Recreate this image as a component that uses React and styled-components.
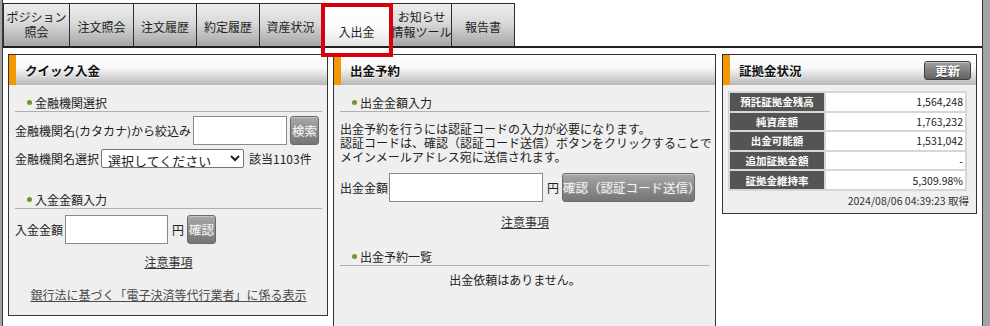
import React from 'react';
import styled, { createGlobalStyle } from 'styled-components';

const Global = createGlobalStyle`
  html, body { margin: 0; padding: 0; background: #fff; }
  body { font-family: "Noto Sans CJK JP", "Noto Sans", sans-serif; color: #222; }
  * { box-sizing: border-box; }
`;

const Frame = styled.div`
  width: 990px;
  height: 326px;
  overflow: hidden;
  background: #a3a3a3;
  padding-left: 2px;
  padding-right: 7px;
`;

const Page = styled.div`
  height: 326px;
  background: #fff;
  border-left: 1px solid #3a3a3a;
  border-right: 1px solid #3a3a3a;
`;

const TabStrip = styled.div`
  display: flex;
  align-items: flex-start;
  height: 48px;
  padding-top: 3px;
  border-bottom: 2px solid #222;
`;

const Tab = styled.div`
  position: relative;
  flex: none;
  width: ${p => p.$w}px;
  height: ${p => (p.$active ? 41 : 43)}px;
  margin-top: ${p => (p.$active ? 2 : 0)}px;
  border: 1px solid #2e2e2e;
  border-left: ${p => (p.$first ? '1px solid #2e2e2e' : 'none')};
  border-bottom: none;
  border-top: ${p => (p.$active ? '2px solid #f39800' : '1px solid #2e2e2e')};
  background: ${p =>
    p.$active
      ? 'linear-gradient(to bottom, #ffffff 0%, #fbfbfb 55%, #e3e3e3 100%)'
      : 'linear-gradient(to bottom, #ededed 0%, #d9d9d9 45%, #b4b4b4 85%, #a6a6a6 100%)'};
  display: flex;
  align-items: center;
  justify-content: center;
  text-align: center;
  white-space: nowrap;
  font-size: 12px;
  line-height: 15px;
  color: #1e1e1e;
  padding-top: ${p => (p.$active ? 9 : p.$multi ? 0 : 3)}px;
  padding-bottom: ${p => (p.$multi ? 3 : 0)}px;
`;

const TabLine = styled.span`
  display: block;
  height: 15px;
`;

const RedBox = styled.div`
  position: absolute;
  left: -1px;
  top: -4px;
  width: 72px;
  height: 54px;
  border: 4px solid #d7000f;
  pointer-events: none;
  z-index: 2;
`;

const PanelsRow = styled.div`
  display: flex;
  align-items: flex-start;
  padding: 6px 0 0 5px;
`;

const Panel = styled.section`
  flex: none;
  width: ${p => p.$w}px;
  height: ${p => p.$h}px;
  margin-left: ${p => p.$ml || 0}px;
  background: #efefef;
  border: 1px solid #333;
  display: flex;
  flex-direction: column;
`;

const PanelHeader = styled.header`
  height: 30px;
  flex: none;
  display: flex;
  align-items: center;
  justify-content: space-between;
  border-left: 7px solid #f39800;
  padding: 0 5px 0 9px;
  background: linear-gradient(to bottom, #ffffff 0%, #f8f8f8 42%, #dcdcdc 68%, #b8b8b8 100%);
`;

const PanelTitle = styled.h2`
  margin: 0;
  font-size: 12.5px;
  font-weight: bold;
  color: #111;
  text-shadow: 0 1px 0 #fff;
`;

const PanelBody = styled.div`
  padding: 0 5px 0 6px;
  display: flex;
  flex-direction: column;
`;

const SectionTitle = styled.div`
  margin-top: ${p => p.$mt}px;
  height: 19px;
  line-height: 19px;
  border-bottom: 1px solid #b0b0b0;
  padding-left: 12px;
  display: flex;
  align-items: center;
  font-size: 12px;
  color: #222;
`;

const Dot = styled.span`
  width: 5px;
  height: 5px;
  border-radius: 50%;
  background: #6a9a2b;
  margin-right: 3px;
  margin-top: 1px;
`;

const Row = styled.div`
  display: flex;
  align-items: center;
  margin-top: ${p => p.$mt}px;
  font-size: 12px;
  color: #222;
  white-space: nowrap;
`;

const TextInput = styled.input`
  width: ${p => p.$w}px;
  height: 29px;
  margin-left: ${p => p.$ml}px;
  border: 1px solid #8a8a8a;
  background: #fff;
  border-radius: 0;
  padding: 0 3px;
  font: inherit;
`;

const Yen = styled.span`
  margin-left: 4px;
`;

const GrayButton = styled.button`
  width: ${p => p.$w}px;
  height: 29px;
  margin-left: ${p => p.$ml}px;
  padding: 0;
  border: 1px solid #6a6a6a;
  border-radius: 3px;
  background: linear-gradient(to bottom, #a9a9a9 0%, #8c8c8c 50%, #757575 100%);
  color: #f2f2f2;
  font-family: inherit;
  font-size: 12.5px;
  white-space: nowrap;
  text-shadow: 0 0 2px rgba(255, 255, 255, 0.35);
  box-shadow: inset 0 1px 0 rgba(255, 255, 255, 0.35);
`;

const Select = styled.select`
  width: 143px;
  height: 19px;
  margin-left: 2px;
  font-family: inherit;
  font-size: 13px;
  color: #222;
  background: #fff;
  border: 1px solid #767676;
  border-radius: 2px;
  padding: 0 0 0 2px;
`;

const Count = styled.span`
  margin-left: 5px;
`;

const LinkLine = styled.div`
  margin-top: ${p => p.$mt}px;
  text-align: center;
  font-size: 12px;
  line-height: 16px;
  white-space: nowrap;
`;

const Link = styled.a`
  color: ${p => (p.$muted ? '#4a4a4a' : '#333')};
  text-decoration: underline;
  cursor: pointer;
`;

const Paragraph = styled.p`
  margin: 10px 0 0;
  font-size: 12px;
  line-height: 14px;
  color: #222;
  white-space: nowrap;
`;

const Notice = styled.div`
  margin-top: 6px;
  text-align: center;
  font-size: 12px;
  line-height: 16px;
  padding-right: 20px;
`;

const UpdateButton = styled.button`
  width: 47px;
  height: 19px;
  padding: 0;
  border: 1px solid #3f3f3f;
  border-radius: 3px;
  background: linear-gradient(to bottom, #a0a0a0 0%, #7d7d7d 55%, #626262 100%);
  color: #fff;
  font-family: inherit;
  font-size: 12.5px;
  font-weight: bold;
  line-height: 17px;
  text-shadow: 0 1px 1px #333;
  box-shadow: inset 0 1px 0 rgba(255, 255, 255, 0.4);
`;

const MarginTable = styled.table`
  margin: 6px 0 0 5px;
  width: 239px;
  border-collapse: collapse;
  font-size: 10.5px;
`;

const LabelCell = styled.th`
  width: 96px;
  height: 19.6px;
  padding: 0;
  border: 2px solid #d6d6d6;
  background: #545454;
  color: #fff;
  font-weight: bold;
  text-align: center;
  line-height: 15px;
`;

const ValueCell = styled.td`
  height: 19.6px;
  padding: 0 2px 0 0;
  border: 2px solid #d6d6d6;
  background: #fff;
  color: #222;
  text-align: right;
  line-height: 15px;
`;

const Stamp = styled.div`
  margin-top: 2px;
  padding-right: 7px;
  text-align: right;
  font-size: 10.5px;
  line-height: 16px;
  color: #333;
`;

const tabs = [
  { w: 67, label: ['ポジション', '照会'], first: true },
  { w: 64, label: ['注文照会'] },
  { w: 63, label: ['注文履歴'] },
  { w: 63, label: ['約定履歴'] },
  { w: 62, label: ['資産状況'] },
  { w: 70, label: ['入出金'], active: true },
  { w: 60, label: ['お知らせ', '情報ツール'] },
  { w: 63, label: ['報告書'] },
];

const marginRows = [
  ['預託証拠金残高', '1,564,248'],
  ['純資産額', '1,763,232'],
  ['出金可能額', '1,531,042'],
  ['追加証拠金額', '-'],
  ['証拠金維持率', '5,309.98%'],
];

export default function App() {
  return (
    <>
      <Global />
      <Frame>
        <Page>
          <TabStrip>
            {tabs.map((t, i) => (
              <Tab
                key={i}
                $w={t.w}
                $first={t.first}
                $active={t.active}
                $multi={t.label.length > 1}
              >
                <span>
                  {t.label.map((l, j) => (
                    <TabLine key={j}>{l}</TabLine>
                  ))}
                </span>
                {t.active && <RedBox />}
              </Tab>
            ))}
          </TabStrip>

          <PanelsRow>
            <Panel $w={320} $h={262}>
              <PanelHeader>
                <PanelTitle>クイック入金</PanelTitle>
              </PanelHeader>
              <PanelBody>
                <SectionTitle $mt={8}><Dot />金融機関選択</SectionTitle>
                <Row $mt={4}>
                  <span>金融機関名(カタカナ)から絞込み</span>
                  <TextInput $w={94} $ml={2} />
                  <GrayButton $w={29} $ml={3}>検索</GrayButton>
                </Row>
                <Row $mt={4}>
                  <span>金融機関名選択</span>
                  <Select defaultValue="">
                    <option value="">選択してください</option>
                  </Select>
                  <Count>該当1103件</Count>
                </Row>
                <SectionTitle $mt={22}><Dot />入金金額入力</SectionTitle>
                <Row $mt={6}>
                  <span>入金金額</span>
                  <TextInput $w={103} $ml={2} />
                  <Yen>円</Yen>
                  <GrayButton $w={29} $ml={3}>確認</GrayButton>
                </Row>
                <LinkLine $mt={10}><Link>注意事項</Link></LinkLine>
                <LinkLine $mt={17}><Link $muted>銀行法に基づく「電子決済等代行業者」に係る表示</Link></LinkLine>
              </PanelBody>
            </Panel>

            <Panel $w={383} $h={300} $ml={5}>
              <PanelHeader>
                <PanelTitle>出金予約</PanelTitle>
              </PanelHeader>
              <PanelBody>
                <SectionTitle $mt={8}><Dot />出金金額入力</SectionTitle>
                <Paragraph>
                  出金予約を行うには認証コードの入力が必要になります。<br />
                  認証コードは、確認（認証コード送信）ボタンをクリックすることで<br />
                  メインメールアドレス宛に送信されます。
                </Paragraph>
                <Row $mt={9}>
                  <span>出金金額</span>
                  <TextInput $w={154} $ml={1} />
                  <Yen>円</Yen>
                  <GrayButton $w={133} $ml={3}>確認（認証コード送信）</GrayButton>
                </Row>
                <LinkLine $mt={12}><Link>注意事項</Link></LinkLine>
                <SectionTitle $mt={17}><Dot />出金予約一覧</SectionTitle>
                <Notice>出金依頼はありません。</Notice>
              </PanelBody>
            </Panel>

            <Panel $w={255} $h={160} $ml={6}>
              <PanelHeader>
                <PanelTitle>証拠金状況</PanelTitle>
                <UpdateButton>更新</UpdateButton>
              </PanelHeader>
              <MarginTable>
                <tbody>
                  {marginRows.map(([k, v]) => (
                    <tr key={k}>
                      <LabelCell>{k}</LabelCell>
                      <ValueCell>{v}</ValueCell>
                    </tr>
                  ))}
                </tbody>
              </MarginTable>
              <Stamp>2024/08/06 04:39:23 取得</Stamp>
            </Panel>
          </PanelsRow>
        </Page>
      </Frame>
    </>
  );
}
